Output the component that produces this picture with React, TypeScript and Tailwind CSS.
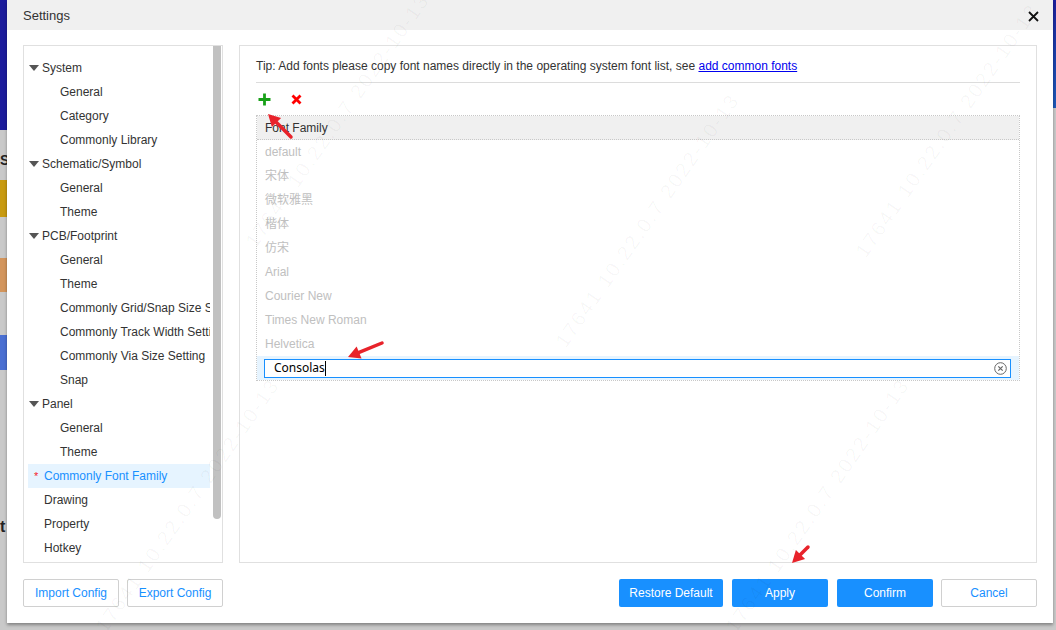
import React from 'react';

type Node = { label: string; kind: 'group' | 'child' | 'leaf'; active?: boolean };

const tree: Node[] = [
  { label: 'System', kind: 'group' },
  { label: 'General', kind: 'child' },
  { label: 'Category', kind: 'child' },
  { label: 'Commonly Library', kind: 'child' },
  { label: 'Schematic/Symbol', kind: 'group' },
  { label: 'General', kind: 'child' },
  { label: 'Theme', kind: 'child' },
  { label: 'PCB/Footprint', kind: 'group' },
  { label: 'General', kind: 'child' },
  { label: 'Theme', kind: 'child' },
  { label: 'Commonly Grid/Snap Size Setting', kind: 'child' },
  { label: 'Commonly Track Width Setting', kind: 'child' },
  { label: 'Commonly Via Size Setting', kind: 'child' },
  { label: 'Snap', kind: 'child' },
  { label: 'Panel', kind: 'group' },
  { label: 'General', kind: 'child' },
  { label: 'Theme', kind: 'child' },
  { label: 'Commonly Font Family', kind: 'leaf', active: true },
  { label: 'Drawing', kind: 'leaf' },
  { label: 'Property', kind: 'leaf' },
  { label: 'Hotkey', kind: 'leaf' },
];

const fonts = ['default', '宋体', '微软雅黑', '楷体', '仿宋', 'Arial', 'Courier New', 'Times New Roman', 'Helvetica'];

function Caret() {
  return (
    <svg width="10" height="6" viewBox="0 0 10 6" className="mr-[3px] shrink-0">
      <polygon points="0,0 10,0 5,6" fill="#555" />
    </svg>
  );
}

function Arrow({ x1, y1, x2, y2 }: { x1: number; y1: number; x2: number; y2: number }) {
  // tip sits at x2,y2
  const dx = x2 - x1;
  const dy = y2 - y1;
  const len = Math.hypot(dx, dy);
  const ux = dx / len;
  const uy = dy / len;
  const bx = x2 - ux * 12;
  const by = y2 - uy * 12;
  const px = -uy;
  const py = ux;
  const head = `${x2},${y2} ${bx + px * 6.5},${by + py * 6.5} ${bx - px * 6.5},${by - py * 6.5}`;
  return (
    <>
      <line x1={x1} y1={y1} x2={bx} y2={by} stroke="#e8232b" strokeWidth="3.5" strokeLinecap="round" />
      <polygon points={head} fill="#e8232b" />
    </>
  );
}

function Watermark({ x, y }: { x: number; y: number }) {
  return (
    <div
      className="absolute whitespace-nowrap text-[20px] text-black/[0.035] origin-left -rotate-[55deg] tracking-[2px]"
      style={{ left: x, top: y }}
    >
      17641 10.22.0.7 2022-10-13
    </div>
  );
}

export default function App() {
  return (
    <div className="relative w-[1056px] h-[630px] overflow-hidden bg-[#c9c9c9] font-['Liberation_Sans','Noto_Sans_CJK_SC',Arial,sans-serif] text-[12px] text-[#333]">
      {/* background app bits */}
      <div className="absolute left-0 top-0 w-[10px] h-[130px] bg-[#1c1c9c]" />
      <div className="absolute left-0 top-[150px] w-[10px] text-[14px] font-bold text-[#222]">S</div>
      <div className="absolute left-0 top-[180px] w-[8px] h-[37px] bg-[#c89a10]" />
      <div className="absolute left-0 top-[258px] w-[8px] h-[34px] bg-[#d3955c]" />
      <div className="absolute left-0 top-[335px] w-[8px] h-[35px] bg-[#4a6fd2]" />
      <div className="absolute left-0 top-[515px] text-[16px] font-bold text-[#222]">t</div>
      <div className="absolute right-0 top-0 w-[6px] h-[108px] bg-gradient-to-b from-[#1c1c9c] to-[#1e5ab8]" />

      {/* dialog */}
      <div className="absolute left-[7px] top-0 w-[1046px] h-[623px] bg-white flex flex-col shadow-[0_2px_3px_rgba(0,0,0,0.35)]">
        <div className="h-[30px] shrink-0 bg-[#f0f0f0] flex items-center justify-between pl-[16px] pr-[14px] pt-[2px]">
          <span className="text-[13px] text-[#333]">Settings</span>
          <svg width="11" height="11" viewBox="0 0 11 11">
            <path d="M1 1 L10 10 M10 1 L1 10" stroke="#111" strokeWidth="1.8" />
          </svg>
        </div>

        <div className="flex-1 flex flex-col px-[16px] pt-[15px] pb-[16px]">
          <div className="flex gap-[16px] h-[518px]">
            {/* left tree panel */}
            <div className="relative w-[200px] border border-[#e0e0e0] flex">
              <div className="flex-1 pt-[10px] pl-[4px] pr-[3px] overflow-hidden">
                {tree.map((n, i) => (
                  <div
                    key={i}
                    className={`h-[24px] flex items-center whitespace-nowrap overflow-hidden ${n.active ? 'bg-[#e6f4ff] text-[#1890ff]' : ''}`}
                  >
                    {n.kind === 'group' && (
                      <span className="flex items-center pl-[1px]">
                        <Caret />
                        <span className="text-[12px]">{n.label}</span>
                      </span>
                    )}
                    {n.kind === 'child' && <span className="pl-[32px]">{n.label}</span>}
                    {n.kind === 'leaf' && (
                      <span className="flex items-center">
                        <span className={`w-[16px] pl-[6px] text-[#f5222d] text-[11px] ${n.active ? '' : 'invisible'}`}>*</span>
                        <span>{n.label}</span>
                      </span>
                    )}
                  </div>
                ))}
              </div>
              <div className="w-[9px] shrink-0 relative">
                <div className="absolute left-0 top-0 w-[8px] h-[473px] bg-[#c1c1c1] rounded-b-[4px]" />
              </div>
            </div>

            {/* right panel */}
            <div className="flex-1 border border-[#e0e0e0] px-[16px] pt-[12px] flex flex-col">
              <div className="pb-[8px] border-b border-[#dcdcdc] leading-[16px]">
                Tip: Add fonts please copy font names directly in the operating system font list, see{' '}
                <span className="text-[#0000ee] underline">add common fonts</span>
              </div>
              <div className="h-[32px] flex items-center gap-[20px] pl-[2px]">
                <svg width="13" height="13" viewBox="0 0 13 13">
                  <path d="M6.5 0.5 V12.5 M0.5 6.5 H12.5" stroke="#18a018" strokeWidth="2.8" />
                </svg>
                <svg width="11" height="11" viewBox="0 0 11 11">
                  <path d="M1.5 1.5 L9.5 9.5 M9.5 1.5 L1.5 9.5" stroke="#ff0000" strokeWidth="2.8" />
                </svg>
              </div>
              <div className="border border-dotted border-[#c8c8c8]">
                <div className="h-[24px] bg-[#f0f0f0] flex items-center pl-[8px] border-b border-dotted border-[#c8c8c8] text-[#333]">
                  Font Family
                </div>
                {fonts.map((f) => (
                  <div key={f} className="h-[24px] flex items-center pl-[8px] text-[#c0c0c0]">
                    {f}
                  </div>
                ))}
                <div className="h-[24px] bg-[#e6f4ff] flex items-center pl-[7px] pr-[8px]">
                  <div className="flex-1 h-[19px] border-[1.5px] border-[#1890ff] bg-white flex items-center pl-[9px] pr-[3px]">
                    <span className="text-black text-[12px] font-['Noto_Sans','Liberation_Sans',sans-serif]">Consolas</span>
                    <span className="w-[1px] h-[15px] bg-black" />
                    <span className="flex-1" />
                    <svg width="13" height="13" viewBox="0 0 13 13">
                      <circle cx="6.5" cy="6.5" r="5.8" fill="none" stroke="#666" strokeWidth="1" />
                      <path d="M4.3 4.3 L8.7 8.7 M8.7 4.3 L4.3 8.7" stroke="#666" strokeWidth="1.2" />
                    </svg>
                  </div>
                </div>
              </div>
            </div>
          </div>

          {/* footer */}
          <div className="mt-[16px] flex items-center h-[28px]">
            <button className="w-[96px] h-[28px] border border-[#d0d0d0] rounded-[2px] text-[#1890ff] bg-white">
              Import Config
            </button>
            <button className="ml-[8px] w-[96px] h-[28px] border border-[#d0d0d0] rounded-[2px] text-[#1890ff] bg-white">
              Export Config
            </button>
            <div className="flex-1" />
            <button className="w-[104px] h-[28px] rounded-[2px] bg-[#1890ff] text-white">Restore Default</button>
            <button className="ml-[9px] w-[96px] h-[28px] rounded-[2px] bg-[#1890ff] text-white">Apply</button>
            <button className="ml-[9px] w-[96px] h-[28px] rounded-[2px] bg-[#1890ff] text-white">Confirm</button>
            <button className="ml-[8px] w-[96px] h-[28px] border border-[#d0d0d0] rounded-[2px] text-[#1890ff] bg-white">
              Cancel
            </button>
          </div>
        </div>
      </div>

      {/* watermarks */}
      <div className="absolute inset-0 pointer-events-none">
        <Watermark x={100} y={615} />
        <Watermark x={560} y={330} />
        <Watermark x={730} y={615} />
        <Watermark x={860} y={240} />
        <Watermark x={250} y={230} />
      </div>

      {/* annotation arrows */}
      <svg className="absolute left-0 top-0 pointer-events-none" width="1056" height="630">
        <Arrow x1={291} y1={137} x2={268} y2={114} />
        <Arrow x1={382} y1={343} x2={348} y2={357} />
        <Arrow x1={808} y1={547} x2={792} y2={563} />
      </svg>
    </div>
  );
}
